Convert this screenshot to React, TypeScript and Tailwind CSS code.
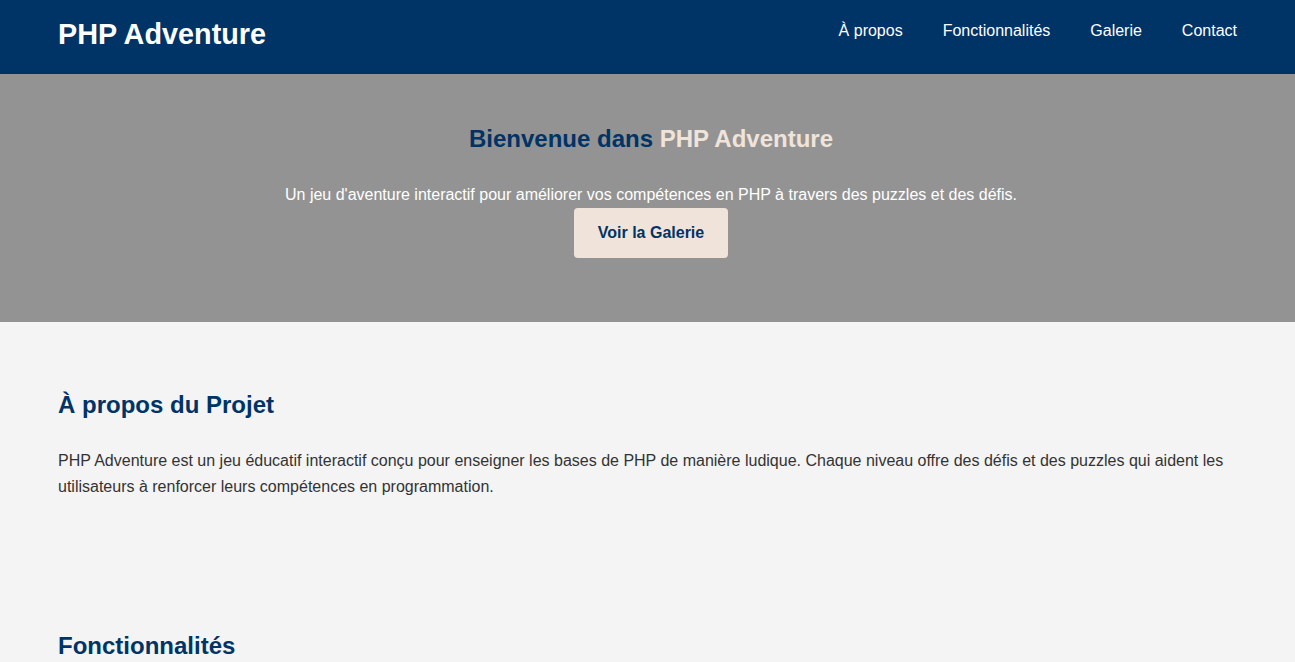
export default function App() {
  return (
    <div className="min-h-[662px] bg-[#f4f4f4]" style={{ fontFamily: '"Liberation Sans", Arial, sans-serif' }}>
      <header className="h-[74px] bg-[#003366] flex justify-between items-start px-[58px] text-white">
        <h1 className="mt-[18px] text-[28.8px] font-bold leading-[normal]">PHP Adventure</h1>
        <nav className="mt-[22px] flex gap-[40px] text-[16px] leading-[normal]">
          <a>À propos</a>
          <a>Fonctionnalités</a>
          <a>Galerie</a>
          <a>Contact</a>
        </nav>
      </header>
      <section className="h-[248px] bg-[#939393] flex flex-col items-center pt-[51px] pl-[7px]">
        <h2 className="text-[24px] font-bold leading-[normal] text-[#003366]">
          Bienvenue dans <span className="text-[#f0e4da]">PHP Adventure</span>
        </h2>
        <p className="mt-[33px] text-[16px] leading-[normal] text-white">
          Un jeu d'aventure interactif pour améliorer vos compétences en PHP à travers des puzzles et des défis.
        </p>
        <button className="mt-[4px] bg-[#f0e4da] text-[#003366] font-bold text-[16px] leading-[normal] px-[23.5px] py-[16px] rounded-[4px]">
          Voir la Galerie
        </button>
      </section>
      <section className="px-[58px] pt-[69px]">
        <h2 className="text-[24px] font-bold leading-[normal] text-[#003366]">À propos du Projet</h2>
        <p className="mt-[29px] text-[16px] leading-[1.6] text-[#333333]">
          PHP Adventure est un jeu éducatif interactif conçu pour enseigner les bases de PHP de manière ludique. Chaque niveau offre des défis et des puzzles qui aident les utilisateurs à renforcer leurs compétences en programmation.
        </p>
      </section>
      <section className="px-[58px] pt-[133px] pb-[40px]">
        <h2 className="text-[24px] font-bold leading-[normal] text-[#003366]">Fonctionnalités</h2>
      </section>
    </div>
  );
}
